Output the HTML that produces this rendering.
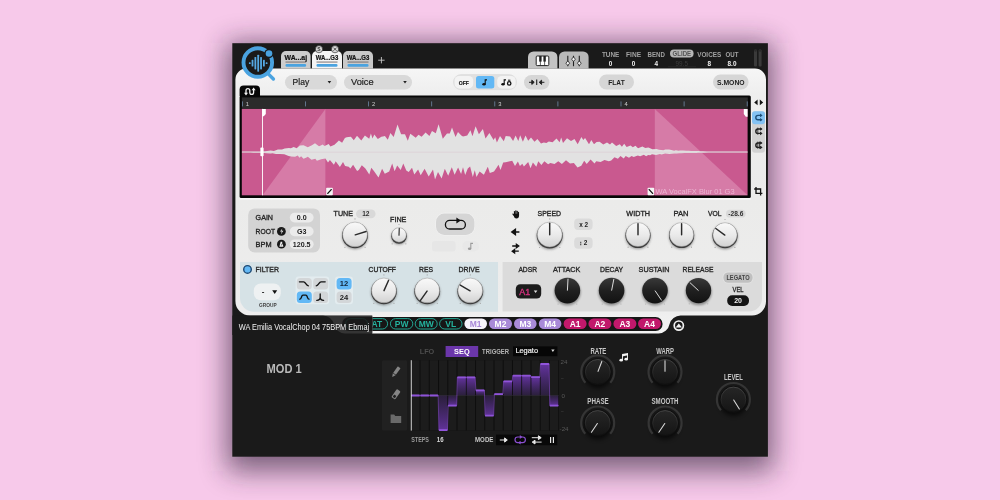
<!DOCTYPE html>
<html><head><meta charset="utf-8"><title>Sampler</title>
<style>
html,body{margin:0;padding:0;background:#f7c9ea;}
body{width:1000px;height:500px;overflow:hidden;position:relative;}
svg{position:absolute;left:0;top:0;display:block;will-change:transform;font-family:"Liberation Sans",sans-serif;}
</style></head><body>
<svg width="1000" height="500" viewBox="0 0 1000 500">
<defs>
<filter id="sh" x="-25%" y="-25%" width="150%" height="150%"><feGaussianBlur stdDeviation="14"/></filter>
<filter id="b1" x="-30%" y="-30%" width="160%" height="160%"><feGaussianBlur stdDeviation="0.9"/></filter>
<filter id="b2" x="-30%" y="-30%" width="160%" height="160%"><feGaussianBlur stdDeviation="2"/></filter>
<linearGradient id="gpan" gradientUnits="userSpaceOnUse" x1="0" y1="68" x2="0" y2="335"><stop offset="0" stop-color="#f6f6f6"/><stop offset="0.1" stop-color="#eeeeee"/><stop offset="0.5" stop-color="#ebebea"/><stop offset="0.9" stop-color="#ededed"/><stop offset="1" stop-color="#f4f4f4"/></linearGradient>
<linearGradient id="gk" x1="0" y1="0" x2="0" y2="1"><stop offset="0" stop-color="#f9f9f9"/><stop offset="0.55" stop-color="#e9e9e9"/><stop offset="1" stop-color="#d2d2d2"/></linearGradient>
<linearGradient id="gd" x1="0" y1="0" x2="0" y2="1"><stop offset="0" stop-color="#393939"/><stop offset="0.5" stop-color="#202020"/><stop offset="1" stop-color="#121212"/></linearGradient>
<linearGradient id="gm" x1="0" y1="0" x2="0" y2="1"><stop offset="0" stop-color="#262626"/><stop offset="1" stop-color="#151515"/></linearGradient>
<linearGradient id="gms" x1="0" y1="0" x2="0" y2="1"><stop offset="0" stop-color="#484848"/><stop offset="0.6" stop-color="#262626"/><stop offset="1" stop-color="#0e0e0e"/></linearGradient>
<linearGradient id="gp" x1="0" y1="0" x2="0" y2="1"><stop offset="0" stop-color="#7238b8" stop-opacity="0.85"/><stop offset="1" stop-color="#552a92" stop-opacity="0.28"/></linearGradient>
<linearGradient id="gn" x1="0" y1="0" x2="0" y2="1"><stop offset="0" stop-color="#552a92" stop-opacity="0.28"/><stop offset="1" stop-color="#7238b8" stop-opacity="0.8"/></linearGradient>
</defs>

<rect x="227" y="43" width="546" height="428" fill="#33203a" opacity="0.64" filter="url(#sh)"/>
<rect x="232.3" y="43.2" width="535.6" height="413.5" fill="#1a1a1a"/>
<path d="M281 68.6 V56 a5 5 0 0 1 5 -5 h19.6 a5 5 0 0 1 5 5 V68.6 z" fill="#cdcdcd"/>
<text x="295.8" y="60.3" font-size="7" font-weight="bold" text-anchor="middle" fill="#111" textLength="22.6" lengthAdjust="spacingAndGlyphs" stroke="#111" stroke-width="0.2">WA...aj</text>
<rect x="285.5" y="61.6" width="20.6" height="0.9" fill="#6e6464"/>
<rect x="285.5" y="63.9" width="20.6" height="2.9" rx="1.2" fill="#4aa3e0"/>
<path d="M312 68.6 V56 a5 5 0 0 1 5 -5 h20 a5 5 0 0 1 5 5 V68.6 z" fill="#f4f4f4"/>
<text x="327.0" y="60.3" font-size="7" font-weight="bold" text-anchor="middle" fill="#111" textLength="22.6" lengthAdjust="spacingAndGlyphs" stroke="#111" stroke-width="0.2">WA...G3</text>
<rect x="316.5" y="61.6" width="21" height="0.9" fill="#6e6464"/>
<rect x="316.5" y="63.9" width="21" height="2.9" rx="1.2" fill="#4aa3e0"/>
<path d="M343 68.6 V56 a5 5 0 0 1 5 -5 h20 a5 5 0 0 1 5 5 V68.6 z" fill="#c9c9c9"/>
<text x="358.0" y="60.3" font-size="7" font-weight="bold" text-anchor="middle" fill="#111" textLength="22.6" lengthAdjust="spacingAndGlyphs" stroke="#111" stroke-width="0.2">WA...G3</text>
<rect x="347.5" y="61.6" width="21" height="0.9" fill="#6e6464"/>
<rect x="347.5" y="63.9" width="21" height="2.9" rx="1.2" fill="#4aa3e0"/>
<circle cx="319" cy="49.2" r="3.6" fill="#d8d8d8" stroke="#1a1a1a" stroke-width="0.6"/>
<text x="319" y="51.2" font-size="5" font-weight="bold" text-anchor="middle" fill="#333" >S</text>
<circle cx="335" cy="49.2" r="3.6" fill="#d8d8d8" stroke="#1a1a1a" stroke-width="0.6"/>
<path d="M333.4 47.6 l3.2 3.2 M336.6 47.6 l-3.2 3.2" stroke="#333" stroke-width="0.8" fill="none"/>
<path d="M378.2 60.2 h6.4 M381.4 57 v6.4" stroke="#c8c8c8" stroke-width="0.9" fill="none"/>
<path d="M528 68.6 V57 a5.5 5.5 0 0 1 5.5 -5.5 h18.4 a5.5 5.5 0 0 1 5.5 5.5 V68.6 z" fill="#c3c3c3"/>
<path d="M559 68.6 V57 a5.5 5.5 0 0 1 5.5 -5.5 h18.6 a5.5 5.5 0 0 1 5.5 5.5 V68.6 z" fill="#b9b9b9"/>
<rect x="536.2" y="56" width="12.6" height="9.6" rx="1" fill="#fff" stroke="#222" stroke-width="1"/>
<path d="M540.4 56 v9.6 M544.6 56 v9.6" stroke="#222" stroke-width="0.7"/>
<rect x="539.2" y="56" width="2.4" height="5.6" fill="#222"/><rect x="543.4" y="56" width="2.4" height="5.6" fill="#222"/>
<path d="M567.8 55.8 v10.4" stroke="#222" stroke-width="1.1"/>
<path d="M567.8 60.900000000000006 l1.9 2.3 l-1.9 2.3 l-1.9 -2.3 z" fill="#f4f4f4" stroke="#222" stroke-width="0.8"/>
<path d="M573.5 55.8 v10.4" stroke="#222" stroke-width="1.1"/>
<path d="M573.5 56.900000000000006 l1.9 2.3 l-1.9 2.3 l-1.9 -2.3 z" fill="#f4f4f4" stroke="#222" stroke-width="0.8"/>
<path d="M579.3 55.8 v10.4" stroke="#222" stroke-width="1.1"/>
<path d="M579.3 60.900000000000006 l1.9 2.3 l-1.9 2.3 l-1.9 -2.3 z" fill="#f4f4f4" stroke="#222" stroke-width="0.8"/>
<text x="610.6" y="57.2" font-size="6.6" font-weight="bold" text-anchor="middle" fill="#a2a2a2" textLength="17.4" lengthAdjust="spacingAndGlyphs" >TUNE</text>
<text x="610.6" y="65.8" font-size="6.4" font-weight="bold" text-anchor="middle" fill="#f0f0f0" >0</text>
<text x="633.6" y="57.2" font-size="6.6" font-weight="bold" text-anchor="middle" fill="#a2a2a2" textLength="15" lengthAdjust="spacingAndGlyphs" >FINE</text>
<text x="633.6" y="65.8" font-size="6.4" font-weight="bold" text-anchor="middle" fill="#f0f0f0" >0</text>
<text x="656.2" y="57.2" font-size="6.6" font-weight="bold" text-anchor="middle" fill="#a2a2a2" textLength="17.4" lengthAdjust="spacingAndGlyphs" >BEND</text>
<text x="656.2" y="65.8" font-size="6.4" font-weight="bold" text-anchor="middle" fill="#f0f0f0" >4</text>
<text x="709.2" y="57.2" font-size="6.6" font-weight="bold" text-anchor="middle" fill="#a2a2a2" textLength="24" lengthAdjust="spacingAndGlyphs" >VOICES</text>
<text x="709.2" y="65.8" font-size="6.4" font-weight="bold" text-anchor="middle" fill="#f0f0f0" >8</text>
<text x="732" y="57.2" font-size="6.6" font-weight="bold" text-anchor="middle" fill="#a2a2a2" textLength="13" lengthAdjust="spacingAndGlyphs" >OUT</text>
<text x="732" y="65.8" font-size="6.4" font-weight="bold" text-anchor="middle" fill="#f0f0f0" >8.0</text>
<rect x="670" y="49.6" width="23.6" height="8" rx="4" ry="4" fill="#b6b6b6" />
<text x="681.8" y="56" font-size="6.4" font-weight="bold" text-anchor="middle" fill="#555" textLength="18.6" lengthAdjust="spacingAndGlyphs" >GLIDE</text>
<rect x="668" y="66.6" width="28" height="0.5" fill="#303030"/>
<text x="681.8" y="65.8" font-size="6.4" font-weight="normal" text-anchor="middle" fill="#3c3c3c" >99.5</text>
<rect x="754" y="49.6" width="3" height="17" rx="1" ry="1" fill="#3a3a3a" />
<rect x="758.6" y="49.6" width="3" height="17" rx="1" ry="1" fill="#3a3a3a" />
<circle cx="755.5" cy="50.6" r="1.2" fill="#2a2a2a"/><circle cx="760.1" cy="50.6" r="1.2" fill="#2a2a2a"/>
<path d="M246.4 68.6 H755 a11 11 0 0 1 11 11 V301.6 a14 14 0 0 1 -14 14 H680.5 a11.5 11.5 0 0 0 -11 8.6 a11.5 11.5 0 0 1 -11 9.4 H372 V315.6 H250 a14.6 14.6 0 0 1 -14.6 -14.6 V79.6 a11 11 0 0 1 11 -11 z" fill="url(#gpan)"/>
<path d="M268 73.6 L273.4 79" stroke="#4aa3e0" stroke-width="3.4" stroke-linecap="round"/>
<circle cx="257.8" cy="62.5" r="14.3" fill="#1a1a1a" stroke="#4aa3e0" stroke-width="3.9"/>
<circle cx="269" cy="53.5" r="4.7" fill="#1a1a1a"/><circle cx="269" cy="53.5" r="3.3" fill="#4aa3e0"/>
<rect x="248.90" y="62.30" width="1.8" height="1.80" rx="0.6" fill="#55a8e2"/>
<rect x="251.60" y="59.80" width="1.8" height="6.80" rx="0.6" fill="#55a8e2"/>
<rect x="254.45" y="57.00" width="1.8" height="12.40" rx="0.6" fill="#55a8e2"/>
<rect x="257.30" y="54.70" width="1.8" height="17.00" rx="0.6" fill="#55a8e2"/>
<rect x="260.15" y="57.00" width="1.8" height="12.40" rx="0.6" fill="#55a8e2"/>
<rect x="263.00" y="59.80" width="1.8" height="6.80" rx="0.6" fill="#55a8e2"/>
<rect x="265.70" y="62.30" width="1.8" height="1.80" rx="0.6" fill="#55a8e2"/>
<rect x="285" y="75" width="52" height="14.6" rx="7.3" ry="7.3" fill="#d9d9d9" />
<text x="292.6" y="85.2" font-size="9.2" font-weight="normal" text-anchor="start" fill="#222" textLength="16.6" lengthAdjust="spacingAndGlyphs" stroke="#222" stroke-width="0.2">Play</text>
<path d="M327.6 81 h3.6 l-1.8 2.4 z" fill="#222"/>
<rect x="344" y="75" width="68" height="14.6" rx="7.3" ry="7.3" fill="#d9d9d9" />
<text x="351" y="85.2" font-size="9.2" font-weight="normal" text-anchor="start" fill="#222" textLength="22.6" lengthAdjust="spacingAndGlyphs" stroke="#222" stroke-width="0.2">Voice</text>
<path d="M403.2 81 h3.6 l-1.8 2.4 z" fill="#222"/>
<rect x="453.4" y="74.6" width="63.2" height="15" rx="7.5" ry="7.5" fill="#e1e1e1" stroke="#d6d6d6" stroke-width="0.5"/>
<rect x="454.6" y="76" width="18.6" height="12.4" rx="4.5" ry="4.5" fill="#f3f3f3" />
<rect x="476" y="76.1" width="18.3" height="12.3" rx="2.5" ry="2.5" fill="#62b8f5" />
<rect x="497.2" y="76" width="18.4" height="12.4" rx="4.5" ry="4.5" fill="#f3f3f3" />
<text x="463.8" y="85" font-size="6" font-weight="bold" text-anchor="middle" fill="#1a1a1a" textLength="10.2" lengthAdjust="spacingAndGlyphs" stroke="#1a1a1a" stroke-width="0.2">OFF</text>
<ellipse cx="484" cy="84.300" rx="1.700" ry="1.300" fill="#111"/><path d="M485.200 84.300 v-4.400 h1.800" stroke="#111" stroke-width="1.100" fill="none"/>
<ellipse cx="503" cy="84.300" rx="1.700" ry="1.300" fill="#111"/><path d="M504.200 84.300 v-4.400 h1.800" stroke="#111" stroke-width="1.100" fill="none"/>
<circle cx="509.200" cy="83.400" r="1.700" fill="none" stroke="#111" stroke-width="1.300"/><path d="M508 80.200 h2.400" stroke="#111" stroke-width="1"/>
<rect x="524" y="75" width="25.4" height="14.6" rx="7.3" ry="7.3" fill="#d6d6d6" />
<path d="M529 82.3 h4.4 M531.8 80.2 l2.4 2.1 l-2.4 2.1 z M544.4 82.3 h-4.4 M541.6 80.2 l-2.4 2.1 l2.4 2.1 z" stroke="#222" stroke-width="1" fill="#222"/>
<path d="M536.7 79.6 v5.4" stroke="#222" stroke-width="1.1"/>
<rect x="599" y="74.6" width="35" height="14.8" rx="7.4" ry="7.4" fill="#d6d6d6" />
<text x="616.5" y="85" font-size="7" font-weight="bold" text-anchor="middle" fill="#222" textLength="16.4" lengthAdjust="spacingAndGlyphs" >FLAT</text>
<rect x="713" y="74.6" width="35.6" height="14.8" rx="7.4" ry="7.4" fill="#d6d6d6" />
<text x="730.8" y="85" font-size="7" font-weight="bold" text-anchor="middle" fill="#222" textLength="27.6" lengthAdjust="spacingAndGlyphs" >S.MONO</text>
<path d="M239.6 96 V89.6 a4 4 0 0 1 4 -4 h12.4 a4 4 0 0 1 4 4 V96 z" fill="#070707"/>
<rect x="239.6" y="198" width="511.2" height="1.8" rx="0.9" ry="0.9" fill="#f9f9f9" />
<rect x="239.6" y="95.6" width="511.2" height="102.3" rx="1.5" ry="1.5" fill="#070707" />
<path d="M246 93.400 v-2.800 a1.900 1.900 0 0 1 3.800 0 v1.800 a1.900 1.900 0 0 0 3.800 0 v-2.600" stroke="#f2f2f2" stroke-width="1.300" fill="none"/>
<path d="M244 92.800 h4 l-2 2.700 z M251.600 90.200 h4 l-2 -2.700 z" fill="#f2f2f2"/>
<rect x="241.8" y="97.4" width="506" height="11.4" fill="#2b2b2b"/>
<rect x="242.0" y="101.4" width="0.8" height="5" fill="#6f88a6"/>
<rect x="305.1" y="101.4" width="0.8" height="5" fill="#6f88a6"/>
<rect x="368.2" y="101.4" width="0.8" height="5" fill="#6f88a6"/>
<rect x="431.3" y="101.4" width="0.8" height="5" fill="#6f88a6"/>
<rect x="494.4" y="101.4" width="0.8" height="5" fill="#6f88a6"/>
<rect x="557.5" y="101.4" width="0.8" height="5" fill="#6f88a6"/>
<rect x="620.6" y="101.4" width="0.8" height="5" fill="#6f88a6"/>
<rect x="683.7" y="101.4" width="0.8" height="5" fill="#6f88a6"/>
<rect x="746.8" y="101.4" width="0.8" height="5" fill="#6f88a6"/>
<text x="245.8" y="106.3" font-size="5.8" font-weight="normal" text-anchor="start" fill="#cdcdcd" >1</text>
<text x="372.0" y="106.3" font-size="5.8" font-weight="normal" text-anchor="start" fill="#cdcdcd" >2</text>
<text x="498.2" y="106.3" font-size="5.8" font-weight="normal" text-anchor="start" fill="#cdcdcd" >3</text>
<text x="624.4" y="106.3" font-size="5.8" font-weight="normal" text-anchor="start" fill="#cdcdcd" >4</text>
<rect x="241.8" y="108.9" width="505.8" height="86.4" fill="#c9598f"/>
<path d="M262.6 195.3 L325.4 108.9 V195.3 z" fill="#de8fb7" opacity="0.62"/>
<path d="M654.8 108.9 V195.3 H747.6 z" fill="#de8fb7" opacity="0.62"/>
<path d="M242.0 151.6 L245.3 151.6 L247.1 151.6 L251.0 151.6 L253.3 151.5 L256.2 151.5 L259.1 151.5 L261.1 151.5 L265.2 151.2 L268.9 150.8 L270.6 150.6 L273.9 150.9 L277.9 149.5 L282.0 149.5 L284.7 148.4 L288.9 148.0 L290.9 148.2 L293.7 147.1 L296.7 148.3 L300.0 145.6 L303.5 145.2 L307.8 147.3 L311.9 145.2 L315.0 143.2 L319.0 146.3 L320.8 145.5 L322.6 144.6 L324.6 146.1 L328.7 144.0 L330.4 146.5 L334.5 144.7 L338.9 140.4 L342.1 142.8 L344.9 138.0 L346.6 137.2 L350.9 136.7 L353.8 140.3 L357.0 135.7 L361.3 140.6 L364.9 135.5 L369.2 138.8 L370.9 133.5 L372.5 138.6 L374.3 134.4 L377.8 139.0 L381.4 136.8 L384.9 135.9 L387.8 139.7 L390.4 133.0 L393.7 137.0 L397.5 124.4 L401.1 134.3 L405.0 134.2 L407.8 140.8 L410.3 133.8 L413.1 135.8 L415.7 137.7 L418.5 134.7 L421.6 136.7 L425.6 132.6 L429.4 136.0 L432.0 131.0 L435.8 133.3 L438.6 124.2 L442.8 138.8 L447.0 133.6 L449.8 133.5 L452.0 127.6 L455.5 137.0 L458.0 132.1 L461.3 135.6 L463.0 136.4 L467.2 135.6 L470.4 130.2 L472.5 136.2 L475.6 126.2 L478.9 134.3 L482.9 128.9 L485.5 138.5 L489.4 132.9 L493.6 140.1 L495.2 137.2 L496.9 142.4 L500.0 136.0 L503.8 141.2 L505.7 136.1 L510.1 136.6 L513.1 141.1 L515.6 135.6 L518.3 141.1 L520.2 135.2 L522.9 141.7 L525.5 135.5 L528.2 140.8 L531.0 137.5 L534.5 141.7 L537.4 139.0 L541.0 143.5 L543.8 142.5 L546.4 143.1 L548.8 141.4 L552.6 142.3 L556.5 138.4 L559.6 142.2 L561.2 137.4 L563.0 143.0 L567.0 138.2 L571.0 141.1 L574.5 138.9 L577.7 144.2 L581.4 137.0 L583.3 140.1 L585.1 137.9 L589.0 144.3 L591.3 140.0 L594.0 144.3 L596.6 142.0 L599.6 141.8 L603.3 144.5 L607.0 142.4 L610.0 144.5 L612.0 142.5 L616.2 146.0 L619.8 144.2 L621.9 146.7 L624.2 143.7 L626.6 147.0 L630.6 145.4 L632.8 147.3 L635.5 145.8 L638.0 148.2 L642.4 146.5 L645.3 148.1 L648.4 147.4 L652.4 149.2 L656.7 149.0 L659.0 149.8 L663.3 150.3 L665.4 149.6 L669.0 149.4 L671.3 149.9 L674.1 150.8 L675.9 150.2 L678.5 150.8 L680.1 150.5 L683.1 150.6 L686.3 150.8 L689.0 150.8 L691.0 150.9 L694.4 151.0 L698.5 151.1 L700.4 151.2 L703.0 151.3 L706.8 151.4 L710.3 151.5 L714.1 151.5 L717.8 151.5 L721.3 151.5 L723.2 151.5 L725.8 151.5 L729.3 151.5 L731.4 151.6 L734.8 151.6 L738.9 151.6 L740.8 151.6 L742.8 151.6 L746.4 151.6 L747.6 151.6 L747.6 152.6 L747.2 152.6 L743.7 152.6 L739.4 152.6 L736.0 152.6 L731.7 152.6 L727.5 152.6 L724.6 152.6 L722.2 152.6 L719.8 152.6 L717.8 152.6 L715.1 152.6 L713.1 152.6 L711.2 152.6 L708.4 152.6 L704.3 152.7 L702.7 152.8 L699.7 152.8 L698.0 152.8 L696.3 152.9 L693.6 152.9 L690.4 153.0 L687.4 153.0 L684.6 153.1 L681.1 153.2 L679.2 153.3 L676.6 153.4 L674.1 153.6 L671.5 153.7 L669.5 153.9 L665.1 153.4 L661.6 154.6 L659.9 154.0 L656.1 154.9 L652.0 154.3 L650.1 155.3 L648.2 154.9 L646.1 156.2 L643.9 154.7 L640.2 156.3 L637.8 155.5 L633.7 157.0 L631.6 155.9 L629.0 157.8 L625.7 155.9 L623.7 158.5 L620.5 156.1 L617.9 158.7 L614.5 157.3 L611.2 160.6 L608.8 161.2 L604.5 160.1 L600.6 162.1 L596.2 161.2 L594.5 163.6 L590.6 159.6 L586.7 164.1 L584.2 160.7 L581.3 165.7 L577.5 167.5 L573.9 163.1 L570.0 163.4 L566.0 160.2 L561.9 164.0 L558.3 161.3 L554.5 164.0 L550.4 162.9 L548.1 164.3 L544.4 161.3 L541.4 165.1 L538.3 161.3 L536.3 166.8 L532.9 162.4 L530.5 168.3 L528.2 162.0 L523.9 166.4 L522.3 163.8 L519.9 166.0 L517.9 161.6 L515.0 165.9 L512.2 160.8 L509.9 161.3 L505.6 162.3 L503.2 162.4 L500.5 169.9 L498.5 164.7 L496.6 167.8 L494.0 171.4 L489.8 173.0 L487.8 166.7 L483.9 174.8 L479.6 171.5 L476.5 177.0 L474.8 170.2 L472.8 177.0 L470.1 166.4 L467.8 168.5 L465.2 174.9 L463.0 167.3 L461.1 174.1 L458.1 167.4 L454.6 174.8 L451.8 167.3 L448.2 175.8 L444.8 168.7 L441.6 178.6 L438.0 172.0 L435.0 179.5 L433.0 169.5 L428.7 176.5 L424.6 168.7 L420.7 175.2 L418.1 169.6 L414.3 174.4 L412.0 167.7 L408.7 171.9 L406.3 170.6 L403.3 163.5 L400.7 170.0 L397.2 165.4 L394.6 171.2 L392.2 163.6 L389.2 171.4 L384.8 173.7 L382.1 168.7 L378.5 177.4 L374.1 171.2 L371.3 167.7 L369.3 174.5 L365.4 168.4 L361.8 165.3 L358.8 170.0 L357.1 170.9 L353.1 164.8 L350.4 168.4 L348.7 166.7 L345.1 166.0 L343.0 162.0 L339.9 167.1 L335.7 161.3 L333.9 164.8 L329.9 159.9 L328.0 162.4 L325.4 158.6 L321.2 159.3 L316.9 160.7 L315.3 158.7 L311.5 159.8 L307.8 156.8 L306.0 157.7 L303.5 158.7 L301.1 156.2 L299.5 157.8 L297.7 155.4 L295.1 156.7 L290.8 156.4 L288.6 156.1 L284.3 154.3 L279.9 153.9 L275.9 154.1 L272.6 153.2 L270.5 153.6 L266.4 153.2 L264.2 152.9 L260.9 152.7 L258.7 152.7 L256.7 152.7 L253.3 152.7 L250.4 152.6 L246.2 152.6 L242.0 152.6 z" fill="#e2e2e2"/>
<rect x="241.8" y="151.8" width="505.8" height="0.6" fill="#d9c0cc" opacity="0.7"/>
<rect x="262" y="108.9" width="0.9" height="86.4" fill="#fff"/>
<path d="M262 108.9 h3.8 v5 l-2 2.4 h-1.8 z" fill="#fff"/>
<rect x="260.4" y="147.6" width="3.2" height="8.6" rx="0.8" fill="#fff"/>
<path d="M747.6 108.9 h-3.8 v5 l2 2.8 h1.8 z" fill="#fff"/>
<rect x="326.2" y="187.8" width="6.6" height="7.5" rx="0.8" ry="0.8" fill="#f4f4f4" />
<path d="M327.8 193.4 L331.2 189.6" stroke="#111" stroke-width="1.3" stroke-linecap="round"/>
<rect x="647.6" y="187.8" width="6.6" height="7.5" rx="0.8" ry="0.8" fill="#f4f4f4" />
<path d="M649.2 189.6 L652.6 193.4" stroke="#111" stroke-width="1.3" stroke-linecap="round"/>
<text x="655.6" y="194" font-size="7.6" font-weight="normal" text-anchor="start" fill="#ecb3d2" textLength="79" lengthAdjust="spacingAndGlyphs" >WA VocalFX Blur 01 G3</text>
<path d="M757.6 99.6 v5.6 l-3.4 -2.8 z M759.8 99.6 v5.6 l3.4 -2.8 z" fill="#111"/>
<rect x="752" y="111.2" width="13" height="41.6" rx="3" ry="3" fill="#d2d2d2" />
<rect x="752" y="111.2" width="13" height="13" rx="3" ry="3" fill="#84c2f3" />
<path d="M761.6 115.39999999999999 h-3.6 a2.2 2.2 0 0 0 0 4.4 h3.6" stroke="#1d4f7a" stroke-width="1.4" fill="none"/>
<path d="M760.0 113.6 l2.6 1.800 l-2.600 1.800 z M760.0 118.0 l2.600 1.800 l-2.600 1.800 z" fill="#1d4f7a"/>
<path d="M761.6 129.0 h-3.6 a2.2 2.2 0 0 0 0 4.4 h3.6" stroke="#222" stroke-width="1.4" fill="none"/>
<path d="M760.0 127.19999999999999 l2.6 1.800 l-2.600 1.800 z M760.0 131.6 l2.600 1.800 l-2.600 1.800 z" fill="#222"/>
<path d="M757.8 127.6 v7.2" stroke="#222" stroke-width="0.8"/>
<path d="M761.6 143.0 h-3.6 a2.2 2.2 0 0 0 0 4.4 h3.6" stroke="#222" stroke-width="1.4" fill="none"/>
<path d="M760.0 141.2 l2.6 1.800 l-2.600 1.800 z M760.0 145.6 l2.600 1.800 l-2.600 1.800 z" fill="#222"/>
<path d="M757.8 141.6 v7.2" stroke="#222" stroke-width="0.8"/>
<path d="M759.5 141.6 v7.2" stroke="#222" stroke-width="0.8"/>
<path d="M756 187 v6.4 h6.4 M754.2 189 h6.4 v6.4" stroke="#111" stroke-width="1.3" fill="none"/>
<rect x="248.2" y="208.4" width="71.8" height="44" rx="6.5" ry="6.5" fill="#d3d3d3" />
<text x="255.6" y="220.15" font-size="7.1" font-weight="normal" text-anchor="start" fill="#222" textLength="17.4" lengthAdjust="spacingAndGlyphs" stroke="#222" stroke-width="0.3">GAIN</text>
<rect x="289.8" y="212.79999999999998" width="23.8" height="9.6" rx="4.8" ry="4.8" fill="#ebebeb" />
<text x="301.7" y="220.1" font-size="7.1" font-weight="bold" text-anchor="middle" fill="#222" >0.0</text>
<text x="255.6" y="233.95000000000002" font-size="7.1" font-weight="normal" text-anchor="start" fill="#222" textLength="19.4" lengthAdjust="spacingAndGlyphs" stroke="#222" stroke-width="0.3">ROOT</text>
<rect x="289.8" y="226.6" width="23.8" height="9.6" rx="4.8" ry="4.8" fill="#ebebeb" />
<text x="301.7" y="233.9" font-size="7.1" font-weight="bold" text-anchor="middle" fill="#222" >G3</text>
<text x="255.6" y="246.75" font-size="7.1" font-weight="normal" text-anchor="start" fill="#222" textLength="16" lengthAdjust="spacingAndGlyphs" stroke="#222" stroke-width="0.3">BPM</text>
<rect x="289.8" y="239.39999999999998" width="23.8" height="9.6" rx="4.8" ry="4.8" fill="#ebebeb" />
<text x="301.7" y="246.7" font-size="7.1" font-weight="bold" text-anchor="middle" fill="#222" >120.5</text>
<circle cx="281.4" cy="231.4" r="4.4" fill="#1a1a1a"/><path d="M282.4 228.4 l-2.4 3.2 h1.8 l-1 2.8 l2.6 -3.6 h-1.8 z" fill="#eee"/>
<circle cx="281.4" cy="244.2" r="4.4" fill="#1a1a1a"/><path d="M279.4 246.8 l1.2 -5 h1.6 l1.2 5 z" fill="#eee"/><path d="M281.4 245.4 l1.8 -3.4" stroke="#1a1a1a" stroke-width="0.7"/>
<text x="343.3" y="215.70000000000002" font-size="7.2" font-weight="normal" text-anchor="middle" fill="#262626" textLength="19.4" lengthAdjust="spacingAndGlyphs" stroke="#262626" stroke-width="0.32">TUNE</text>
<rect x="356" y="209.4" width="19.6" height="8.8" rx="4.4" ry="4.4" fill="#d9d9d9" />
<text x="365.8" y="216.2" font-size="6.6" font-weight="bold" text-anchor="middle" fill="#333" >12</text>
<circle cx="355" cy="236.3" r="13.1" fill="#555" opacity="0.5" filter="url(#b1)"/>
<circle cx="355" cy="235.4" r="12.9" fill="#3c3c3c"/>
<circle cx="355" cy="234.45000000000002" r="12.35" fill="url(#gk)" stroke="#8a8a8a" stroke-width="0.4"/>
<line x1="355.25" y1="234.82" x2="366.10" y2="231.51" stroke="#2a2a2a" stroke-width="1.45" stroke-linecap="round"/>
<circle cx="355.00" cy="218.90" r="0.6" fill="#a2a2a2"/>
<circle cx="344.93" cy="247.33" r="0.6" fill="#a2a2a2"/>
<circle cx="365.07" cy="247.33" r="0.6" fill="#a2a2a2"/>
<text x="398.2" y="222.0" font-size="7.2" font-weight="normal" text-anchor="middle" fill="#262626" textLength="16.4" lengthAdjust="spacingAndGlyphs" stroke="#262626" stroke-width="0.32">FINE</text>
<circle cx="399" cy="236.8" r="8.0" fill="#555" opacity="0.5" filter="url(#b1)"/>
<circle cx="399" cy="235.9" r="7.8" fill="#3c3c3c"/>
<circle cx="399" cy="234.95000000000002" r="7.25" fill="url(#gk)" stroke="#8a8a8a" stroke-width="0.4"/>
<line x1="399.01" y1="235.24" x2="399.24" y2="228.38" stroke="#2a2a2a" stroke-width="1.15" stroke-linecap="round"/>
<circle cx="399.00" cy="224.50" r="0.6" fill="#a2a2a2"/>
<circle cx="392.14" cy="243.87" r="0.6" fill="#a2a2a2"/>
<circle cx="405.86" cy="243.87" r="0.6" fill="#a2a2a2"/>
<rect x="435.4" y="212.8" width="39.6" height="22.8" rx="9" ry="9" fill="#f2f2f2" />
<rect x="436" y="213.4" width="38.4" height="21.6" rx="8.5" ry="8.5" fill="#d5d5d5" />
<rect x="445.4" y="220.4" width="20" height="8.6" rx="4.3" fill="none" stroke="#111" stroke-width="1.3"/>
<path d="M456.4 217.4 l4.400 3 l-4.400 3 z" fill="#111"/>
<rect x="432" y="241" width="23.6" height="10.4" rx="3" ry="3" fill="#e6e6e6" />
<rect x="462.4" y="241" width="16.6" height="10.4" rx="5" ry="5" fill="#e8e8e8" />
<ellipse cx="469.6" cy="248.800" rx="1.700" ry="1.300" fill="#9c9c9c"/><path d="M470.800 248.800 v-5.400 h2.200" stroke="#9c9c9c" stroke-width="1.100" fill="none"/>
<g fill="#111" transform="translate(516 214.3) scale(0.8) translate(-516.2 -216.3)"><rect x="513.6" y="212.2" width="1.5" height="5" rx="0.75"/><rect x="515.3" y="211.2" width="1.5" height="6" rx="0.75"/><rect x="517" y="211.8" width="1.5" height="5.4" rx="0.75"/><rect x="518.6" y="213.2" width="1.4" height="4.4" rx="0.7"/><path d="M513.600 215.600 h6.400 v2.600 a3.200 3.200 0 0 1 -6.400 0 z"/><path d="M514.2 219.400 l-2.400 -3 a0.800 0.800 0 0 1 1.300 -0.900 l1.600 1.700 z"/></g>
<path d="M519.400 232 h-5 M515.400 229.400 l-3.600 2.600 l3.600 2.600 z" stroke="#111" stroke-width="1.400" fill="#111"/>
<path d="M512.200 246 h4.600 M516.400 244.200 l2.400 1.800 l-2.400 1.800 z M518.800 251.200 h-4.600 M514.600 249.400 l-2.400 1.800 l2.400 1.800 z" stroke="#111" stroke-width="1.300" fill="#111"/>
<text x="549.3" y="216.0" font-size="7.2" font-weight="normal" text-anchor="middle" fill="#262626" textLength="23.4" lengthAdjust="spacingAndGlyphs" stroke="#262626" stroke-width="0.32">SPEED</text>
<circle cx="549.7" cy="236.4" r="13.2" fill="#555" opacity="0.5" filter="url(#b1)"/>
<circle cx="549.7" cy="235.5" r="13" fill="#3c3c3c"/>
<circle cx="549.7" cy="234.55" r="12.45" fill="url(#gk)" stroke="#8a8a8a" stroke-width="0.4"/>
<line x1="549.70" y1="234.74" x2="549.70" y2="223.30" stroke="#2a2a2a" stroke-width="1.45" stroke-linecap="round"/>
<circle cx="549.70" cy="218.90" r="0.6" fill="#a2a2a2"/>
<circle cx="539.57" cy="247.51" r="0.6" fill="#a2a2a2"/>
<circle cx="559.83" cy="247.51" r="0.6" fill="#a2a2a2"/>
<rect x="574.2" y="218.6" width="18.4" height="11.4" rx="4" ry="4" fill="#dbdbdb" />
<text x="583.6" y="227" font-size="6.4" font-weight="bold" text-anchor="middle" fill="#222" >x 2</text>
<rect x="574.2" y="237.2" width="18.4" height="11.6" rx="4" ry="4" fill="#dbdbdb" />
<text x="583.6" y="245.3" font-size="6.4" font-weight="bold" text-anchor="middle" fill="#222" >∶ 2</text>
<text x="638.2" y="216.20000000000002" font-size="7.2" font-weight="normal" text-anchor="middle" fill="#262626" textLength="23.7" lengthAdjust="spacingAndGlyphs" stroke="#262626" stroke-width="0.32">WIDTH</text>
<circle cx="638" cy="236.4" r="12.799999999999999" fill="#555" opacity="0.5" filter="url(#b1)"/>
<circle cx="638" cy="235.5" r="12.6" fill="#3c3c3c"/>
<circle cx="638" cy="234.55" r="12.049999999999999" fill="url(#gk)" stroke="#8a8a8a" stroke-width="0.4"/>
<line x1="638.00" y1="234.75" x2="638.00" y2="223.66" stroke="#2a2a2a" stroke-width="1.45" stroke-linecap="round"/>
<circle cx="638.00" cy="219.30" r="0.6" fill="#a2a2a2"/>
<circle cx="628.12" cy="247.20" r="0.6" fill="#a2a2a2"/>
<circle cx="647.88" cy="247.20" r="0.6" fill="#a2a2a2"/>
<text x="681" y="216.20000000000002" font-size="7.2" font-weight="normal" text-anchor="middle" fill="#262626" textLength="15" lengthAdjust="spacingAndGlyphs" stroke="#262626" stroke-width="0.32">PAN</text>
<circle cx="681.6" cy="236.4" r="12.799999999999999" fill="#555" opacity="0.5" filter="url(#b1)"/>
<circle cx="681.6" cy="235.5" r="12.6" fill="#3c3c3c"/>
<circle cx="681.6" cy="234.55" r="12.049999999999999" fill="url(#gk)" stroke="#8a8a8a" stroke-width="0.4"/>
<line x1="681.60" y1="234.75" x2="681.60" y2="223.66" stroke="#2a2a2a" stroke-width="1.45" stroke-linecap="round"/>
<circle cx="681.60" cy="219.30" r="0.6" fill="#a2a2a2"/>
<circle cx="671.72" cy="247.20" r="0.6" fill="#a2a2a2"/>
<circle cx="691.48" cy="247.20" r="0.6" fill="#a2a2a2"/>
<text x="714.8" y="216.20000000000002" font-size="7.2" font-weight="normal" text-anchor="middle" fill="#262626" textLength="13.5" lengthAdjust="spacingAndGlyphs" stroke="#262626" stroke-width="0.32">VOL</text>
<circle cx="725" cy="236.6" r="12.799999999999999" fill="#555" opacity="0.5" filter="url(#b1)"/>
<circle cx="725" cy="235.7" r="12.6" fill="#3c3c3c"/>
<circle cx="725" cy="234.75" r="12.049999999999999" fill="url(#gk)" stroke="#8a8a8a" stroke-width="0.4"/>
<line x1="724.80" y1="235.05" x2="715.83" y2="228.53" stroke="#2a2a2a" stroke-width="1.45" stroke-linecap="round"/>
<circle cx="725.00" cy="219.50" r="0.6" fill="#a2a2a2"/>
<circle cx="715.12" cy="247.40" r="0.6" fill="#a2a2a2"/>
<circle cx="734.88" cy="247.40" r="0.6" fill="#a2a2a2"/>
<rect x="726" y="209.8" width="19.6" height="7.8" rx="3.9" ry="3.9" fill="#d9d9d9" />
<text x="735.8" y="216.1" font-size="6.4" font-weight="bold" text-anchor="middle" fill="#333" textLength="15" lengthAdjust="spacingAndGlyphs" >-28.6</text>
<path d="M240 262 H498 V311.8 H254 a14 14 0 0 1 -14 -14 z" fill="#d6e2e6"/>
<circle cx="247.5" cy="269.4" r="3.8" fill="#62b8f5" stroke="#1f4a74" stroke-width="1.4"/>
<text x="255.6" y="272" font-size="7.2" font-weight="normal" text-anchor="start" fill="#262626" textLength="23.4" lengthAdjust="spacingAndGlyphs" stroke="#262626" stroke-width="0.32">FILTER</text>
<rect x="253.8" y="283.4" width="27" height="16.8" rx="7" ry="7" fill="#eef1f2" />
<text x="263" y="293.8" font-size="8" font-weight="bold" text-anchor="middle" fill="#111" >-</text>
<path d="M272.200 290.200 h5 l-2.500 3.800 z" fill="#111"/>
<text x="267.8" y="306.8" font-size="5.6" font-weight="bold" text-anchor="middle" fill="#444" textLength="17.6" lengthAdjust="spacingAndGlyphs" >GROUP</text>
<rect x="295.6" y="276.6" width="33.6" height="27.6" rx="3" ry="3" fill="#e3ecef" />
<rect x="296.8" y="278" width="15" height="11.6" rx="3.5" ry="3.5" fill="#d3d6d8" />
<rect x="313.2" y="278" width="15" height="11.6" rx="3.5" ry="3.5" fill="#d3d6d8" />
<rect x="296.8" y="291.4" width="15" height="11.6" rx="3.5" ry="3.5" fill="#62b8f5" />
<rect x="313.2" y="291.4" width="15" height="11.6" rx="3.5" ry="3.5" fill="#d3d6d8" />
<path d="M299.400 281.800 h4.200 c2.200 0 2.200 4 4.800 4" stroke="#111" stroke-width="1.300" fill="none" stroke-linecap="round"/>
<path d="M316.200 285.800 c2.600 0 2.600 -4 4.800 -4 h4.200" stroke="#111" stroke-width="1.300" fill="none" stroke-linecap="round"/>
<path d="M299.800 299.200 c2 0 1.200 -4 3.200 -4 h2.800 c2 0 1.200 4 3.200 4" stroke="#111" stroke-width="1.300" fill="none" stroke-linecap="round"/>
<path d="M320.200 294 v3.200 c0 1.800 -1.600 3 -3.400 3.200 M320.200 297.200 c0 1.800 1.600 3 3.400 3.200" stroke="#111" stroke-width="1.300" fill="none" stroke-linecap="round"/>
<rect x="335" y="276.6" width="18" height="27.6" rx="3" ry="3" fill="#e3ecef" />
<rect x="336.6" y="278" width="15" height="11.6" rx="3.5" ry="3.5" fill="#62b8f5" />
<rect x="336.6" y="291.4" width="15" height="11.6" rx="3.5" ry="3.5" fill="#d3d6d8" />
<text x="344.1" y="286.3" font-size="7.6" font-weight="bold" text-anchor="middle" fill="#123" >12</text>
<text x="344.1" y="299.8" font-size="7.6" font-weight="bold" text-anchor="middle" fill="#222" >24</text>
<text x="382.3" y="272.0" font-size="7.2" font-weight="normal" text-anchor="middle" fill="#262626" textLength="27.4" lengthAdjust="spacingAndGlyphs" stroke="#262626" stroke-width="0.32">CUTOFF</text>
<circle cx="383.9" cy="292.29999999999995" r="13.1" fill="#555" opacity="0.5" filter="url(#b1)"/>
<circle cx="383.9" cy="291.4" r="12.9" fill="#3c3c3c"/>
<circle cx="383.9" cy="290.45" r="12.35" fill="url(#gk)" stroke="#8a8a8a" stroke-width="0.4"/>
<line x1="384.00" y1="290.66" x2="388.62" y2="280.29" stroke="#2a2a2a" stroke-width="1.45" stroke-linecap="round"/>
<circle cx="383.90" cy="274.90" r="0.6" fill="#a2a2a2"/>
<circle cx="373.83" cy="303.33" r="0.6" fill="#a2a2a2"/>
<circle cx="393.97" cy="303.33" r="0.6" fill="#a2a2a2"/>
<text x="426" y="272.0" font-size="7.2" font-weight="normal" text-anchor="middle" fill="#262626" textLength="14" lengthAdjust="spacingAndGlyphs" stroke="#262626" stroke-width="0.32">RES</text>
<circle cx="427.2" cy="292.29999999999995" r="13.1" fill="#555" opacity="0.5" filter="url(#b1)"/>
<circle cx="427.2" cy="291.4" r="12.9" fill="#3c3c3c"/>
<circle cx="427.2" cy="290.45" r="12.35" fill="url(#gk)" stroke="#8a8a8a" stroke-width="0.4"/>
<line x1="427.05" y1="291.11" x2="420.46" y2="300.35" stroke="#2a2a2a" stroke-width="1.45" stroke-linecap="round"/>
<circle cx="427.20" cy="274.90" r="0.6" fill="#a2a2a2"/>
<circle cx="417.13" cy="303.33" r="0.6" fill="#a2a2a2"/>
<circle cx="437.27" cy="303.33" r="0.6" fill="#a2a2a2"/>
<text x="469" y="272.0" font-size="7.2" font-weight="normal" text-anchor="middle" fill="#262626" textLength="21.2" lengthAdjust="spacingAndGlyphs" stroke="#262626" stroke-width="0.32">DRIVE</text>
<circle cx="470.3" cy="292.29999999999995" r="13.1" fill="#555" opacity="0.5" filter="url(#b1)"/>
<circle cx="470.3" cy="291.4" r="12.9" fill="#3c3c3c"/>
<circle cx="470.3" cy="290.45" r="12.35" fill="url(#gk)" stroke="#8a8a8a" stroke-width="0.4"/>
<line x1="470.08" y1="290.77" x2="460.25" y2="285.09" stroke="#2a2a2a" stroke-width="1.45" stroke-linecap="round"/>
<circle cx="470.30" cy="274.90" r="0.6" fill="#a2a2a2"/>
<circle cx="460.23" cy="303.33" r="0.6" fill="#a2a2a2"/>
<circle cx="480.37" cy="303.33" r="0.6" fill="#a2a2a2"/>
<path d="M502.6 262 H762 V298.6 a13 13 0 0 1 -13 13 H502.6 z" fill="#dbdbdb"/>
<text x="527.7" y="272.0" font-size="7.2" font-weight="normal" text-anchor="middle" fill="#262626" textLength="18.6" lengthAdjust="spacingAndGlyphs" stroke="#262626" stroke-width="0.32">ADSR</text>
<text x="566.7" y="272.0" font-size="7.2" font-weight="normal" text-anchor="middle" fill="#262626" textLength="27.4" lengthAdjust="spacingAndGlyphs" stroke="#262626" stroke-width="0.32">ATTACK</text>
<circle cx="567.4" cy="292.1" r="13.3" fill="#000" opacity="0.35" filter="url(#b1)"/>
<circle cx="567.4" cy="290.6" r="12.8" fill="url(#gd)"/>
<line x1="567.42" y1="290.22" x2="568.00" y2="279.10" stroke="#dcdcdc" stroke-width="1" stroke-linecap="round"/>
<circle cx="558.05" cy="303.95" r="0.55" fill="#a8a8a8"/>
<circle cx="576.75" cy="303.95" r="0.55" fill="#a8a8a8"/>
<text x="611.5" y="272.0" font-size="7.2" font-weight="normal" text-anchor="middle" fill="#262626" textLength="23" lengthAdjust="spacingAndGlyphs" stroke="#262626" stroke-width="0.32">DECAY</text>
<circle cx="611.6" cy="292.1" r="13.3" fill="#000" opacity="0.35" filter="url(#b1)"/>
<circle cx="611.6" cy="290.6" r="12.8" fill="url(#gd)"/>
<line x1="611.67" y1="290.22" x2="613.80" y2="279.29" stroke="#dcdcdc" stroke-width="1" stroke-linecap="round"/>
<circle cx="602.25" cy="303.95" r="0.55" fill="#a8a8a8"/>
<circle cx="620.95" cy="303.95" r="0.55" fill="#a8a8a8"/>
<text x="654" y="272.0" font-size="7.2" font-weight="normal" text-anchor="middle" fill="#262626" textLength="30.8" lengthAdjust="spacingAndGlyphs" stroke="#262626" stroke-width="0.32">SUSTAIN</text>
<circle cx="655" cy="292.1" r="13.3" fill="#000" opacity="0.35" filter="url(#b1)"/>
<circle cx="655" cy="290.6" r="12.8" fill="url(#gd)"/>
<line x1="655.21" y1="290.92" x2="661.44" y2="300.15" stroke="#dcdcdc" stroke-width="1" stroke-linecap="round"/>
<circle cx="645.65" cy="303.95" r="0.55" fill="#a8a8a8"/>
<circle cx="664.35" cy="303.95" r="0.55" fill="#a8a8a8"/>
<text x="698" y="272.0" font-size="7.2" font-weight="normal" text-anchor="middle" fill="#262626" textLength="30.9" lengthAdjust="spacingAndGlyphs" stroke="#262626" stroke-width="0.32">RELEASE</text>
<circle cx="698.5" cy="292.1" r="13.2" fill="#000" opacity="0.35" filter="url(#b1)"/>
<circle cx="698.5" cy="290.6" r="12.7" fill="url(#gd)"/>
<line x1="698.22" y1="290.34" x2="690.14" y2="282.80" stroke="#dcdcdc" stroke-width="1" stroke-linecap="round"/>
<circle cx="689.21" cy="303.87" r="0.55" fill="#a8a8a8"/>
<circle cx="707.79" cy="303.87" r="0.55" fill="#a8a8a8"/>
<rect x="515.8" y="284.2" width="25.4" height="14.4" rx="4.5" ry="4.5" fill="#1c1c1c" />
<text x="519.2" y="294.6" font-size="8.6" font-weight="normal" text-anchor="start" fill="#d3327f" textLength="11" lengthAdjust="spacingAndGlyphs" stroke="#d3327f" stroke-width="0.35">A1</text>
<path d="M533.8 290.4 h3.6 l-1.8 2.6 z" fill="#e0e0e0"/>
<rect x="722.6" y="271.6" width="30.8" height="12" rx="5.5" ry="5.5" fill="#e4e4e4" />
<rect x="723.4" y="272.4" width="29.2" height="10.4" rx="4.8" ry="4.8" fill="#c0c0c0" />
<text x="738" y="279.7" font-size="6.4" font-weight="bold" text-anchor="middle" fill="#454545" textLength="23.2" lengthAdjust="spacingAndGlyphs" >LEGATO</text>
<text x="738" y="292.3" font-size="6.8" font-weight="normal" text-anchor="middle" fill="#222" textLength="11" lengthAdjust="spacingAndGlyphs" stroke="#222" stroke-width="0.28">VEL</text>
<rect x="727.2" y="295.2" width="21.8" height="10.8" rx="5" ry="5" fill="#141414" />
<text x="738.1" y="303.2" font-size="7" font-weight="bold" text-anchor="middle" fill="#f0f0f0" >20</text>
<path d="M372 317 H655.6 a7 7 0 0 1 0 14 H372 z" fill="#161616"/>
<rect x="366" y="318.6" width="21.6" height="10.4" rx="5.2" ry="5.2" fill="none" stroke="#24b39e" stroke-width="0.9"/>
<text x="376.8" y="326.8" font-size="8.5" font-weight="bold" text-anchor="middle" fill="#24b39e" >AT</text>
<rect x="390.4" y="318.6" width="22.4" height="10.4" rx="5.2" ry="5.2" fill="none" stroke="#24b39e" stroke-width="0.9"/>
<text x="401.59999999999997" y="326.8" font-size="8.5" font-weight="bold" text-anchor="middle" fill="#24b39e" >PW</text>
<rect x="415.2" y="318.6" width="22" height="10.4" rx="5.2" ry="5.2" fill="none" stroke="#24b39e" stroke-width="0.9"/>
<text x="426.2" y="326.8" font-size="8.5" font-weight="bold" text-anchor="middle" fill="#24b39e" >MW</text>
<rect x="439.6" y="318.6" width="22.4" height="10.4" rx="5.2" ry="5.2" fill="none" stroke="#24b39e" stroke-width="0.9"/>
<text x="450.8" y="326.8" font-size="8.5" font-weight="bold" text-anchor="middle" fill="#24b39e" >VL</text>
<rect x="464.4" y="318.6" width="22.6" height="10.4" rx="5.2" ry="5.2" fill="#f6f3fa" />
<text x="475.7" y="326.8" font-size="8.5" font-weight="bold" text-anchor="middle" fill="#a888d8" >M1</text>
<rect x="489" y="318.6" width="23" height="10.4" rx="5.2" ry="5.2" fill="#a98ad8" />
<text x="500.5" y="326.8" font-size="8.5" font-weight="bold" text-anchor="middle" fill="#fff" >M2</text>
<rect x="514" y="318.6" width="22.6" height="10.4" rx="5.2" ry="5.2" fill="#a98ad8" />
<text x="525.3" y="326.8" font-size="8.5" font-weight="bold" text-anchor="middle" fill="#fff" >M3</text>
<rect x="538.8" y="318.6" width="22.6" height="10.4" rx="5.2" ry="5.2" fill="#a98ad8" />
<text x="550.0999999999999" y="326.8" font-size="8.5" font-weight="bold" text-anchor="middle" fill="#fff" >M4</text>
<rect x="563.6" y="318.6" width="23" height="10.4" rx="5.2" ry="5.2" fill="#c2186b" />
<text x="575.1" y="326.8" font-size="8.5" font-weight="bold" text-anchor="middle" fill="#fff" >A1</text>
<rect x="588.4" y="318.6" width="23" height="10.4" rx="5.2" ry="5.2" fill="#c2186b" />
<text x="599.9" y="326.8" font-size="8.5" font-weight="bold" text-anchor="middle" fill="#fff" >A2</text>
<rect x="613.4" y="318.6" width="23" height="10.4" rx="5.2" ry="5.2" fill="#c2186b" />
<text x="624.9" y="326.8" font-size="8.5" font-weight="bold" text-anchor="middle" fill="#fff" >A3</text>
<rect x="638" y="318.6" width="23" height="10.4" rx="5.2" ry="5.2" fill="#c2186b" />
<text x="649.5" y="326.8" font-size="8.5" font-weight="bold" text-anchor="middle" fill="#fff" >A4</text>
<path d="M323 315.600 a11.500 11.500 0 0 1 11 8.600 a11.500 11.500 0 0 0 11 9.400 H372.400 V315.600 z" fill="#ededed"/>
<path d="M372.400 317 H349 a7 7 0 0 0 0 14 H372.400 z" fill="#161616"/>
<rect x="345.600" y="318.600" width="22" height="10.400" rx="5.200" fill="none" stroke="#24b39e" stroke-width="0.900"/>
<rect x="232.300" y="315.600" width="140.100" height="19.400" fill="#1a1a1a" opacity="0.880"/>
<text x="238.8" y="329.5" font-size="8.4" font-weight="normal" text-anchor="start" fill="#f2f2f2" textLength="130.4" lengthAdjust="spacingAndGlyphs" >WA Emilia VocalChop 04 75BPM Ebmaj</text>
<circle cx="678.8" cy="325.6" r="4.6" fill="#1a1a1a" stroke="#f2f2f2" stroke-width="1.7"/><path d="M675.6 327.4 l3.2 -4 l3.2 4 z" fill="#f2f2f2"/>
<text x="266.6" y="372.8" font-size="13.4" font-weight="bold" text-anchor="start" fill="#b9b9b9" textLength="35.2" lengthAdjust="spacingAndGlyphs" >MOD 1</text>
<text x="427" y="353.8" font-size="7.6" font-weight="bold" text-anchor="middle" fill="#4c4c4c" textLength="14.6" lengthAdjust="spacingAndGlyphs" >LFO</text>
<rect x="445.6" y="346" width="32.6" height="11" fill="#6b36aa"/>
<text x="461.9" y="353.9" font-size="7.8" font-weight="bold" text-anchor="middle" fill="#fff" textLength="15.6" lengthAdjust="spacingAndGlyphs" >SEQ</text>
<text x="495.6" y="354.4" font-size="7.6" font-weight="bold" text-anchor="middle" fill="#b4b4b4" textLength="27" lengthAdjust="spacingAndGlyphs" >TRIGGER</text>
<rect x="513" y="346.4" width="44.4" height="9.8" fill="#060606"/>
<text x="515.4" y="353.2" font-size="7.4" font-weight="normal" text-anchor="start" fill="#f0f0f0" textLength="22.6" lengthAdjust="spacingAndGlyphs" stroke="#f0f0f0" stroke-width="0.2">Legato</text>
<path d="M551.2 349.6 h3.4 l-1.7 2.4 z" fill="#ddd"/>
<rect x="381.8" y="360.2" width="25.4" height="70.4" rx="1.5" fill="#212121"/>
<g transform="translate(395.8 372) rotate(35)"><rect x="-1.7" y="-5.800" width="3.400" height="8" rx="0.5" fill="#858585"/><path d="M-1.700 2.800 h3.400 l-1.700 3.400 z" fill="#858585"/></g>
<g transform="translate(395.8 394.6) rotate(35)"><rect x="-2.300" y="-5.200" width="4.600" height="9.800" rx="1" fill="#858585"/><rect x="-1.300" y="0.800" width="2.600" height="2.800" rx="0.4" fill="#212121"/></g>
<path d="M390.6 414.6 h3.6 l1 1.4 h6 v7 h-10.600 z" fill="#6a6a6a"/>
<rect x="410.8" y="360.2" width="147.9" height="70.4" fill="#0e0e0e"/>
<rect x="411.30" y="360.2" width="8.24" height="70.4" fill="#1c1c1c"/>
<rect x="420.54" y="360.2" width="8.24" height="70.4" fill="#1c1c1c"/>
<rect x="429.79" y="360.2" width="8.24" height="70.4" fill="#1c1c1c"/>
<rect x="439.03" y="360.2" width="8.24" height="70.4" fill="#1c1c1c"/>
<rect x="448.28" y="360.2" width="8.24" height="70.4" fill="#1c1c1c"/>
<rect x="457.52" y="360.2" width="8.24" height="70.4" fill="#1c1c1c"/>
<rect x="466.76" y="360.2" width="8.24" height="70.4" fill="#1c1c1c"/>
<rect x="476.01" y="360.2" width="8.24" height="70.4" fill="#1c1c1c"/>
<rect x="485.25" y="360.2" width="8.24" height="70.4" fill="#1c1c1c"/>
<rect x="494.49" y="360.2" width="8.24" height="70.4" fill="#1c1c1c"/>
<rect x="503.74" y="360.2" width="8.24" height="70.4" fill="#1c1c1c"/>
<rect x="512.98" y="360.2" width="8.24" height="70.4" fill="#1c1c1c"/>
<rect x="522.23" y="360.2" width="8.24" height="70.4" fill="#1c1c1c"/>
<rect x="531.47" y="360.2" width="8.24" height="70.4" fill="#1c1c1c"/>
<rect x="540.71" y="360.2" width="8.24" height="70.4" fill="#1c1c1c"/>
<rect x="549.96" y="360.2" width="8.24" height="70.4" fill="#1c1c1c"/>
<rect x="410.8" y="395.09999999999997" width="147.9" height="0.6" fill="#2c2c2c"/>
<rect x="411.10" y="394.60" width="8.64" height="1.8" rx="0.5" fill="#9458e0"/>
<rect x="420.34" y="394.60" width="8.64" height="1.8" rx="0.5" fill="#9458e0"/>
<rect x="429.59" y="394.60" width="8.64" height="1.8" rx="0.5" fill="#9458e0"/>
<rect x="438.93" y="395.40" width="8.44" height="34.60" fill="url(#gn)"/>
<rect x="438.83" y="429.20" width="8.64" height="1.8" rx="0.5" fill="#9458e0"/>
<rect x="448.18" y="395.40" width="8.44" height="10.03" fill="url(#gn)"/>
<rect x="448.08" y="404.63" width="8.64" height="1.8" rx="0.5" fill="#9458e0"/>
<rect x="457.42" y="377.23" width="8.44" height="18.17" fill="url(#gp)"/>
<rect x="457.32" y="376.43" width="8.64" height="1.8" rx="0.5" fill="#9458e0"/>
<rect x="466.66" y="377.23" width="8.44" height="18.17" fill="url(#gp)"/>
<rect x="466.56" y="376.43" width="8.64" height="1.8" rx="0.5" fill="#9458e0"/>
<rect x="475.91" y="390.21" width="8.44" height="5.19" fill="url(#gp)"/>
<rect x="475.81" y="389.41" width="8.64" height="1.8" rx="0.5" fill="#9458e0"/>
<rect x="485.15" y="395.40" width="8.44" height="20.07" fill="url(#gn)"/>
<rect x="485.05" y="414.67" width="8.64" height="1.8" rx="0.5" fill="#9458e0"/>
<rect x="494.39" y="394.02" width="8.44" height="1.38" fill="url(#gp)"/>
<rect x="494.29" y="393.22" width="8.64" height="1.8" rx="0.5" fill="#9458e0"/>
<rect x="503.64" y="381.21" width="8.44" height="14.19" fill="url(#gp)"/>
<rect x="503.54" y="380.41" width="8.64" height="1.8" rx="0.5" fill="#9458e0"/>
<rect x="512.88" y="375.50" width="8.44" height="19.90" fill="url(#gp)"/>
<rect x="512.78" y="374.70" width="8.64" height="1.8" rx="0.5" fill="#9458e0"/>
<rect x="522.12" y="375.50" width="8.44" height="19.90" fill="url(#gp)"/>
<rect x="522.02" y="374.70" width="8.64" height="1.8" rx="0.5" fill="#9458e0"/>
<rect x="531.37" y="377.06" width="8.44" height="18.34" fill="url(#gp)"/>
<rect x="531.27" y="376.26" width="8.64" height="1.8" rx="0.5" fill="#9458e0"/>
<rect x="540.61" y="363.91" width="8.44" height="31.49" fill="url(#gp)"/>
<rect x="540.51" y="363.11" width="8.64" height="1.8" rx="0.5" fill="#9458e0"/>
<rect x="549.86" y="395.40" width="8.44" height="10.03" fill="url(#gn)"/>
<rect x="549.76" y="404.63" width="8.64" height="1.8" rx="0.5" fill="#9458e0"/>
<path d="M411.10 395.40 L419.74 395.40 L420.34 395.40 L428.99 395.40 L429.59 395.40 L438.23 395.40 L438.83 430.00 L447.47 430.00 L448.08 405.43 L456.72 405.43 L457.32 377.23 L465.96 377.23 L466.56 377.23 L475.21 377.23 L475.81 390.21 L484.45 390.21 L485.05 415.47 L493.69 415.47 L494.29 394.02 L502.94 394.02 L503.54 381.21 L512.18 381.21 L512.78 375.50 L521.43 375.50 L522.02 375.50 L530.67 375.50 L531.27 377.06 L539.91 377.06 L540.51 363.91 L549.16 363.91 L549.76 405.43 L558.40 405.43" fill="none" stroke="#8a4fd0" stroke-width="0.8" stroke-opacity="0.8" stroke-linejoin="round"/>
<rect x="410.8" y="360.2" width="0.9" height="70.4" fill="#e8e8e8"/>
<text x="560.6" y="364.2" font-size="6.2" font-weight="normal" text-anchor="start" fill="#585858" >24</text>
<text x="561.6" y="397.6" font-size="6.2" font-weight="normal" text-anchor="start" fill="#585858" >0</text>
<text x="559.6" y="430.8" font-size="6.2" font-weight="normal" text-anchor="start" fill="#585858" >-24</text>
<rect x="561" y="378.2" width="2.6" height="0.6" fill="#3a3a3a"/><rect x="561" y="411.2" width="2.6" height="0.6" fill="#3a3a3a"/>
<text x="411.2" y="442.2" font-size="6.6" font-weight="bold" text-anchor="start" fill="#9a9a9a" textLength="17.8" lengthAdjust="spacingAndGlyphs" >STEPS</text>
<text x="436.8" y="442.2" font-size="7" font-weight="bold" text-anchor="start" fill="#d8d8d8" textLength="6.8" lengthAdjust="spacingAndGlyphs" >16</text>
<text x="475" y="442.4" font-size="7" font-weight="bold" text-anchor="start" fill="#c8c8c8" textLength="18.4" lengthAdjust="spacingAndGlyphs" >MODE</text>
<rect x="496" y="434.6" width="61.2" height="10.6" fill="#080808"/>
<path d="M499.8 440 h5.600 M504.600 437.900 l2.700 2.100 l-2.700 2.100 z" stroke="#e8e8e8" stroke-width="1" fill="#e8e8e8"/>
<rect x="515" y="437" width="10.400" height="5.600" rx="2.800" fill="none" stroke="#8a4fd0" stroke-width="1.200"/><path d="M519.800 435.100 l2.600 1.900 l-2.600 1.900 z M520.600 440.700 l-2.600 1.900 l2.600 1.900 z" fill="#8a4fd0"/>
<path d="M531.800 437.700 h7 M538.400 435.800 l2.800 1.900 l-2.800 1.900 z M541.600 442.100 h-7 M535 440.200 l-2.800 1.900 l2.800 1.900 z" stroke="#e8e8e8" stroke-width="1" fill="#e8e8e8"/>
<path d="M550.600 437 v6 M553.400 437 v6" stroke="#e8e8e8" stroke-width="1.200"/>
<text x="598.4" y="353.6" font-size="8.2" font-weight="bold" text-anchor="middle" fill="#c6c6c6" textLength="16" lengthAdjust="spacingAndGlyphs" >RATE</text>
<circle cx="597.8" cy="374.4" r="14" fill="#000" opacity="0.6" filter="url(#b2)"/>
<path d="M585.35 382.72 A16.5 16.5 0 1 1 610.25 382.72" fill="none" stroke="#353535" stroke-width="2.2"/>
<circle cx="597.8" cy="371.9" r="13.6" fill="#0f0f0f"/><circle cx="597.8" cy="371.9" r="12.4" fill="url(#gm)" stroke="url(#gms)" stroke-width="0.9"/>
<line x1="598.02" y1="371.34" x2="601.81" y2="361.44" stroke="#d8d8d8" stroke-width="1.1" stroke-linecap="round"/>
<text x="665" y="353.6" font-size="8.2" font-weight="bold" text-anchor="middle" fill="#c6c6c6" textLength="17.6" lengthAdjust="spacingAndGlyphs" >WARP</text>
<circle cx="665" cy="374.4" r="14" fill="#000" opacity="0.6" filter="url(#b2)"/>
<path d="M652.55 382.72 A16.5 16.5 0 1 1 677.45 382.72" fill="none" stroke="#353535" stroke-width="2.2"/>
<circle cx="665" cy="371.9" r="13.6" fill="#0f0f0f"/><circle cx="665" cy="371.9" r="12.4" fill="url(#gm)" stroke="url(#gms)" stroke-width="0.9"/>
<line x1="665.00" y1="371.30" x2="665.00" y2="360.70" stroke="#d8d8d8" stroke-width="1.1" stroke-linecap="round"/>
<text x="598" y="403.8" font-size="8.2" font-weight="bold" text-anchor="middle" fill="#c6c6c6" textLength="21.4" lengthAdjust="spacingAndGlyphs" >PHASE</text>
<circle cx="597.7" cy="425.5" r="14" fill="#000" opacity="0.6" filter="url(#b2)"/>
<path d="M585.25 433.82 A16.5 16.5 0 1 1 610.15 433.82" fill="none" stroke="#353535" stroke-width="2.2"/>
<circle cx="597.7" cy="423" r="13.6" fill="#0f0f0f"/><circle cx="597.7" cy="423" r="12.4" fill="url(#gm)" stroke="url(#gms)" stroke-width="0.9"/>
<line x1="597.36" y1="423.50" x2="591.44" y2="432.29" stroke="#d8d8d8" stroke-width="1.1" stroke-linecap="round"/>
<text x="665" y="403.8" font-size="8.2" font-weight="bold" text-anchor="middle" fill="#c6c6c6" textLength="27" lengthAdjust="spacingAndGlyphs" >SMOOTH</text>
<circle cx="665.1" cy="425.5" r="14" fill="#000" opacity="0.6" filter="url(#b2)"/>
<path d="M652.65 433.82 A16.5 16.5 0 1 1 677.55 433.82" fill="none" stroke="#353535" stroke-width="2.2"/>
<circle cx="665.1" cy="423" r="13.6" fill="#0f0f0f"/><circle cx="665.1" cy="423" r="12.4" fill="url(#gm)" stroke="url(#gms)" stroke-width="0.9"/>
<line x1="664.76" y1="423.50" x2="658.84" y2="432.29" stroke="#d8d8d8" stroke-width="1.1" stroke-linecap="round"/>
<text x="733.4" y="380.0" font-size="8.2" font-weight="bold" text-anchor="middle" fill="#c6c6c6" textLength="19" lengthAdjust="spacingAndGlyphs" >LEVEL</text>
<circle cx="733.4" cy="402.0" r="14" fill="#000" opacity="0.6" filter="url(#b2)"/>
<path d="M720.95 410.32 A16.5 16.5 0 1 1 745.85 410.32" fill="none" stroke="#353535" stroke-width="2.2"/>
<circle cx="733.4" cy="399.5" r="13.6" fill="#0f0f0f"/><circle cx="733.4" cy="399.5" r="12.4" fill="url(#gm)" stroke="url(#gms)" stroke-width="0.9"/>
<line x1="733.72" y1="400.01" x2="739.34" y2="409.00" stroke="#d8d8d8" stroke-width="1.1" stroke-linecap="round"/>
<g fill="#f4f4f4"><ellipse cx="621.2" cy="360.2" rx="1.8" ry="1.4"/><ellipse cx="626.2" cy="359.2" rx="1.8" ry="1.4"/><rect x="622.1" y="354.6" width="0.9" height="5.6"/><rect x="627.1" y="353.6" width="0.9" height="5.6"/><path d="M622.1 354.1 L628 352.900 V355.300 L622.1 356.500 z"/></g>
</svg></body></html>
